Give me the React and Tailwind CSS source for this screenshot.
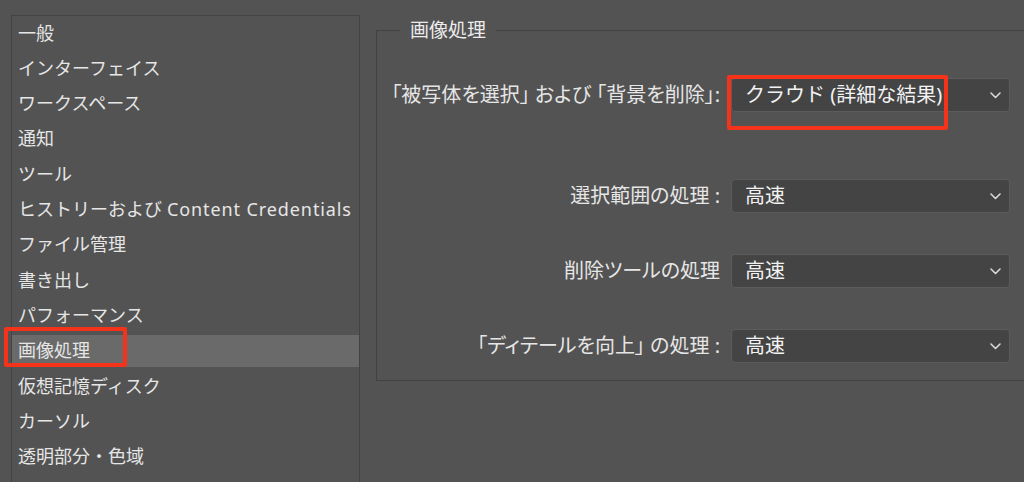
import React from 'react';

const items = [
    '一般',
    'インターフェイス',
    'ワークスペース',
    '通知',
    'ツール',
    'ヒストリーおよび Content Credentials',
    'ファイル管理',
    '書き出し',
    'パフォーマンス',
    '画像処理',
    '仮想記憶ディスク',
    'カーソル',
    '透明部分・色域',
];

const rows = [
    { label: '「被写体を選択」 および 「背景を削除」:', value: 'クラウド (詳細な結果)', mt: 'mt-[34px]' },
    { label: '選択範囲の処理 :', value: '高速', mt: 'mt-[67px]' },
    { label: '削除ツールの処理', value: '高速', mt: 'mt-[41px]' },
    { label: '「ディテールを向上」 の処理 :', value: '高速', mt: 'mt-[41px]' },
];

const Chevron = () => (
    <svg width="11" height="7" viewBox="0 0 11 7" fill="none">
        <polyline points="1,1 5.5,5.5 10,1" stroke="#d8d8d8" strokeWidth="1.6" strokeLinecap="round" strokeLinejoin="round" />
    </svg>
);

const Select = ({ value }) => (
    <div className="w-[279px] h-[34px] bg-[#444444] border border-[#5c5c5c] rounded-[4px] flex items-center justify-between pl-[13px] pr-[8px]">
        <span className="text-[20px] text-[#f2f2f2] leading-none">{value}</span>
        <Chevron />
    </div>
);

// Latin words in the list are set a little wider than the CJK font's own
const ListLabel = ({ text }) => {
    const i = text.indexOf(' ');
    if (i < 0) return text;
    return (
        <>
            {text.slice(0, i)}
            <span className="ml-[5px] tracking-[0.9px]">{text.slice(i + 1)}</span>
        </>
    );
};

export default function App() {
    return (
        <div className="relative w-[1024px] h-[482px] overflow-hidden bg-[#535353] flex font-['Noto_Sans','Noto_Sans_CJK_JP',sans-serif] text-[#e6e6e6]">
            {/* category list */}
            <div className="ml-[11px] mt-[15px] w-[349px] h-[520px] shrink-0 border border-[#434343]">
                <div className="flex flex-col gap-[3.33px] pt-[1px]">
                    {items.map((t) => (
                        <div
                            key={t}
                            className={`h-[32px] flex items-center pl-[6px] text-[18px] whitespace-nowrap ${t === '画像処理' ? 'bg-[#6a6a6a]' : ''}`}
                        >
                            <ListLabel text={t} />
                        </div>
                    ))}
                </div>
            </div>

            {/* settings group */}
            <fieldset className="ml-[16px] mt-[16px] w-[680px] h-[365px] shrink-0 border border-[#424242]">
                <legend className="ml-[23px] px-[10px] text-[19px] leading-[28px] text-[#ececec]">画像処理</legend>
                {rows.map((r) => (
                    <div key={r.value + r.label} className={`flex items-center ${r.mt}`}>
                        <div className="w-[346px] shrink-0 text-right pr-[3px] text-[20px] whitespace-nowrap [font-feature-settings:'palt']">
                            {r.label}
                        </div>
                        <div className="ml-[8px]">
                            <Select value={r.value} />
                        </div>
                    </div>
                ))}
            </fieldset>

            {/* annotations */}
            <div className="absolute left-[4px] top-[327px] w-[123px] h-[40px] border-[4px] border-[#f5331b] rounded-[2px]" />
            <div className="absolute left-[727px] top-[75px] w-[221px] h-[55px] border-[4px] border-[#f5331b] rounded-[2px]" />
        </div>
    );
}
